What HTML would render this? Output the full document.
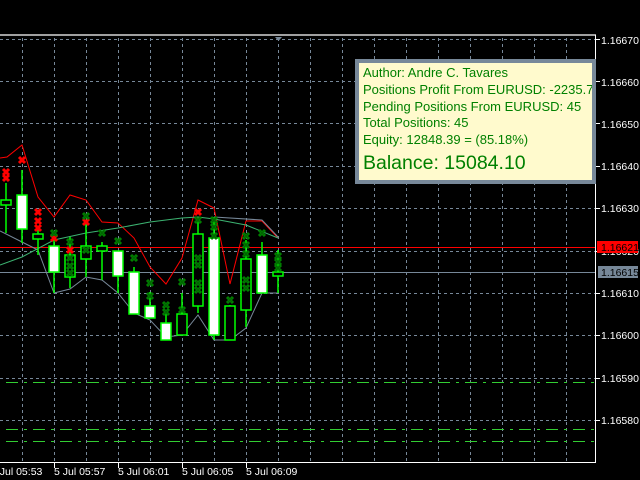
<!DOCTYPE html>
<html><head><meta charset="utf-8"><style>
html,body{margin:0;padding:0;background:#000;width:640px;height:480px;overflow:hidden}
svg{position:absolute;left:0;top:0}
.box{position:absolute;left:355px;top:59px;width:233px;height:117px;background:#fffacd;border:4px solid #778899;font-family:"Liberation Sans",sans-serif;color:#008000;overflow:hidden}
.box div{position:absolute;left:4px;font-size:13px;white-space:nowrap;line-height:14px}
</style></head><body>
<svg width="640" height="480" viewBox="0 0 640 480" xmlns="http://www.w3.org/2000/svg" font-family="Liberation Sans, sans-serif">
<defs>
<g id="gx"><path d="M-3,-3L3,3M3,-3L-3,3" stroke="#008000" stroke-width="3"/><path d="M-2,-2L2,2M2,-2L-2,2" stroke="#006400" stroke-width="1"/></g>
<g id="rx"><path d="M-3,-3L3,3M3,-3L-3,3" stroke="#ff0000" stroke-width="3"/></g>
</defs>
<line x1="0" y1="35" x2="596" y2="35" stroke="#a0a0a0" stroke-width="2"/>
<path d="M275,37h7l-3.5,4z" fill="#778899"/>
<g stroke="#778899" stroke-width="1" stroke-dasharray="3,3">
<path d="M0,39.5H595M0,81.5H595M0,123.5H595M0,166.5H595M0,208.5H595M0,251.5H595M0,293.5H595M0,335.5H595M0,378.5H595M0,420.5H595"/>
<path d="M22.5,38V462M54.5,38V462M86.5,38V462M118.5,38V462M150.5,38V462M182.5,38V462M214.5,38V462M246.5,38V462M278.5,38V462M310.5,38V462M342.5,38V462M374.5,38V462M406.5,38V462M438.5,38V462M470.5,38V462M502.5,38V462M534.5,38V462M566.5,38V462"/>
</g>
<g stroke="#32cd32" stroke-width="1" stroke-dasharray="12,6,3,6">
<path d="M6,382.5H595M6,429.5H595M6,441.5H595"/>
</g>
<line x1="0" y1="247.5" x2="595" y2="247.5" stroke="#ff0000"/>
<line x1="0" y1="272.5" x2="595" y2="272.5" stroke="#778899"/>
<polyline fill="none" stroke="#ff0000" points="0,158 7,157 22,145 38,197 54,217 70,195 86,200 102,222 118,223 134,238 150,267 166,284 182,258 198,200 214,208 230,284 246,221 262,221 278,238"/>
<polyline fill="none" stroke="#3cb371" points="0,265 22,257 54,240 86,233 118,228 150,222 182,218 198,217 214,219 246,225 278,238"/>
<polyline fill="none" stroke="#778899" points="0,231 22,242 38,250 54,293 70,289 86,277 102,280 118,293 134,313 150,320 166,337 182,335 198,315 214,340 230,340 246,328 262,293 278,293"/>
<polyline fill="none" stroke="#778899" points="214,217 262,220 278,237"/>
<g stroke="#00ff00" stroke-width="1.5">
<path d="M6,183V233M22,170V243M38,228V255M54,240V293M70,237V288M86,220V277M102,242V280M118,251V293M134,267V314M150,292V318M166,313V340M182,293V335M198,222V313M214,217V340M230,305V340M246,240V327M262,242V293M278,250V293"/>
<rect x="1" y="200" width="10" height="5" fill="#000"/>
<rect x="17" y="195" width="10" height="34" fill="#fff"/>
<rect x="33" y="234" width="10" height="5" fill="#000"/>
<rect x="49" y="246" width="10" height="26" fill="#fff"/>
<rect x="65" y="255" width="10" height="22" fill="#000"/>
<rect x="81" y="246" width="10" height="13" fill="#000"/>
<rect x="97" y="246" width="10" height="5" fill="#000"/>
<rect x="113" y="251" width="10" height="25" fill="#fff"/>
<rect x="129" y="272" width="10" height="42" fill="#fff"/>
<rect x="145" y="306" width="10" height="12" fill="#fff"/>
<rect x="161" y="323" width="10" height="17" fill="#fff"/>
<rect x="177" y="314" width="10" height="21" fill="#000"/>
<rect x="193" y="234" width="10" height="72" fill="#000"/>
<rect x="209" y="238" width="10" height="97" fill="#fff"/>
<rect x="225" y="306" width="10" height="34" fill="#000"/>
<rect x="241" y="259" width="10" height="51" fill="#000"/>
<rect x="257" y="255" width="10" height="38" fill="#fff"/>
<rect x="273" y="272" width="10" height="4" fill="#000"/>
</g>
<use href="#rx" x="6" y="172"/><use href="#rx" x="6" y="178"/><use href="#rx" x="22" y="160"/><use href="#rx" x="38" y="212"/><use href="#rx" x="38" y="221"/><use href="#rx" x="38" y="228"/><use href="#rx" x="54" y="238"/><use href="#rx" x="70" y="250"/><use href="#rx" x="86" y="222"/><use href="#rx" x="198" y="212"/>
<use href="#gx" x="54" y="233"/><use href="#gx" x="70" y="242"/><use href="#gx" x="70" y="258"/><use href="#gx" x="70" y="266"/><use href="#gx" x="70" y="273"/><use href="#gx" x="86" y="216"/><use href="#gx" x="86" y="250"/><use href="#gx" x="102" y="233"/><use href="#gx" x="118" y="241"/><use href="#gx" x="134" y="258"/><use href="#gx" x="150" y="283"/><use href="#gx" x="150" y="296"/><use href="#gx" x="166" y="305"/><use href="#gx" x="166" y="312"/><use href="#gx" x="182" y="282"/><use href="#gx" x="182" y="310"/><use href="#gx" x="198" y="220"/><use href="#gx" x="198" y="258"/><use href="#gx" x="198" y="265"/><use href="#gx" x="198" y="283"/><use href="#gx" x="198" y="290"/><use href="#gx" x="214" y="220"/><use href="#gx" x="214" y="227"/><use href="#gx" x="214" y="236"/><use href="#gx" x="230" y="300"/><use href="#gx" x="246" y="236"/><use href="#gx" x="246" y="245"/><use href="#gx" x="246" y="254"/><use href="#gx" x="246" y="280"/><use href="#gx" x="246" y="288"/><use href="#gx" x="262" y="233"/><use href="#gx" x="278" y="256"/><use href="#gx" x="278" y="262"/><use href="#gx" x="278" y="268"/>
<line x1="595.5" y1="35" x2="595.5" y2="463" stroke="#fff"/>
<line x1="0" y1="462.5" x2="596" y2="462.5" stroke="#fff"/>
<g stroke="#fff"><path d="M54.5,462V468M118.5,462V468M182.5,462V468M246.5,462V468M596,39.5h4M596,81.5h4M596,123.5h4M596,166.5h4M596,208.5h4M596,251.5h4M596,293.5h4M596,335.5h4M596,378.5h4M596,420.5h4"/></g>
<g fill="#fff" font-size="10.5">
<text x="601" y="44">1.16670</text><text x="601" y="86">1.16660</text><text x="601" y="128">1.16650</text><text x="601" y="170">1.16640</text><text x="601" y="212">1.16630</text><text x="601" y="255">1.16620</text><text x="601" y="297">1.16610</text><text x="601" y="339">1.16600</text><text x="601" y="382">1.16590</text><text x="601" y="424">1.16580</text>
</g>
<rect x="597" y="241" width="41" height="12" fill="#ff0000"/>
<text x="601" y="251" fill="#000" font-size="10.5">1.16621</text>
<rect x="598" y="266" width="40" height="12" fill="#778899"/>
<text x="601" y="276" fill="#000" font-size="10.5">1.16615</text>
<g fill="#fff" font-size="10.5">
<text x="-9" y="475">5 Jul 05:53</text><text x="54" y="475">5 Jul 05:57</text><text x="118" y="475">5 Jul 06:01</text><text x="182" y="475">5 Jul 06:05</text><text x="246" y="475">5 Jul 06:09</text>
</g>
</svg>
<div class="box">
<div style="top:3px">Author: Andre C. Tavares</div>
<div style="top:20px">Positions Profit From EURUSD: -2235.7</div>
<div style="top:37px">Pending Positions From EURUSD: 45</div>
<div style="top:53px">Total Positions: 45</div>
<div style="top:70px">Equity: 12848.39 = (85.18%)</div>
<div style="top:89px;font-size:19.5px;line-height:22px">Balance: 15084.10</div>
</div>
</body></html>
